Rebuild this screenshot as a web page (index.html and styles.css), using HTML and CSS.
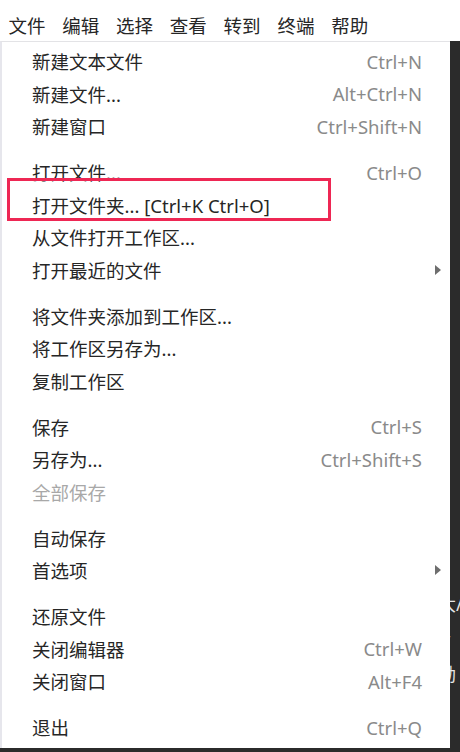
FILE: index.html
```html
<!DOCTYPE html>
<html lang="zh-CN">
<head>
<meta charset="utf-8">
<title>文件菜单</title>
<link rel="stylesheet" href="styles.css">
</head>
<body>
<div class="menubar">
  <span class="mb-item">文件</span>
  <span class="mb-item">编辑</span>
  <span class="mb-item">选择</span>
  <span class="mb-item">查看</span>
  <span class="mb-item">转到</span>
  <span class="mb-item">终端</span>
  <span class="mb-item">帮助</span>
</div>
<div class="workspace">
  <div class="menu">
    <div class="item"><span class="label">新建文本文件</span><span class="key">Ctrl+N</span></div>
    <div class="item"><span class="label">新建文件...</span><span class="key">Alt+Ctrl+N</span></div>
    <div class="item"><span class="label">新建窗口</span><span class="key">Ctrl+Shift+N</span></div>
    <div class="sep"></div>
    <div class="item"><span class="label">打开文件...</span><span class="key">Ctrl+O</span></div>
    <div class="item marked"><span class="label">打开文件夹... [Ctrl+K Ctrl+O]</span><span class="mark"></span></div>
    <div class="item"><span class="label">从文件打开工作区...</span></div>
    <div class="item"><span class="label">打开最近的文件</span><span class="arrow"></span></div>
    <div class="sep"></div>
    <div class="item"><span class="label">将文件夹添加到工作区...</span></div>
    <div class="item"><span class="label">将工作区另存为...</span></div>
    <div class="item"><span class="label">复制工作区</span></div>
    <div class="sep"></div>
    <div class="item"><span class="label">保存</span><span class="key">Ctrl+S</span></div>
    <div class="item"><span class="label">另存为...</span><span class="key">Ctrl+Shift+S</span></div>
    <div class="item disabled"><span class="label">全部保存</span></div>
    <div class="sep"></div>
    <div class="item"><span class="label">自动保存</span></div>
    <div class="item"><span class="label">首选项</span><span class="arrow"></span></div>
    <div class="sep"></div>
    <div class="item"><span class="label">还原文件</span></div>
    <div class="item"><span class="label">关闭编辑器</span><span class="key">Ctrl+W</span></div>
    <div class="item"><span class="label">关闭窗口</span><span class="key">Alt+F4</span></div>
    <div class="sep"></div>
    <div class="item"><span class="label">退出</span><span class="key">Ctrl+Q</span></div>
  </div>
  <div class="editor">
    <span class="frag f1">大/</span>
    <span class="frag f2">y</span>
    <span class="frag f3">励</span>
  </div>
</div>
</body>
</html>
```

FILE: styles.css
```css
html, body {
  margin: 0;
  padding: 0;
}
body {
  width: 460px;
  height: 752px;
  overflow: hidden;
  background: #ffffff;
  font-family: "Noto Sans", "Noto Sans CJK SC", sans-serif;
  color: #262626;
}
.menubar {
  height: 41px;
  box-sizing: border-box;
  padding-top: 10px;
  display: flex;
  font-size: 18.5px;
  line-height: 32px;
}
.mb-item {
  padding: 0 8.4px;
}
.workspace {
  display: flex;
  height: 711px;
  background: #2b2b2b;
}
.menu {
  width: 450px;
  flex: none;
  height: 707px;
  box-sizing: border-box;
  background: #ffffff;
  border-top: 1px solid #e3e3e6;
  border-left: 2px solid #e6e6ec;
  padding: 3px 28px 0 30px;
  font-size: 18.5px;
}
.item {
  position: relative;
  height: 32.5px;
  display: flex;
  align-items: center;
  justify-content: space-between;
  white-space: nowrap;
}
.label {
  color: #262626;
}
.key {
  color: #8a8a8a;
}
.disabled .label {
  color: #a8a8a8;
}
.sep {
  height: 13.5px;
}
.arrow {
  position: relative;
  left: 19px;
  width: 0;
  height: 0;
  border-top: 5px solid transparent;
  border-bottom: 5px solid transparent;
  border-left: 6px solid #6e6e6e;
}
.mark {
  position: absolute;
  left: -25px;
  top: -11px;
  width: 324px;
  height: 43px;
  box-sizing: border-box;
  border: 3px solid #ee2754;
}
.editor {
  flex: 1;
  overflow: hidden;
  display: flex;
  flex-direction: column;
  color: #e6e6e6;
  font-size: 18px;
  line-height: 20px;
  padding-top: 553px;
}
.frag {
  margin-left: -12px;
  white-space: nowrap;
}
.f2 {
  margin-top: 15px;
  margin-left: -9px;
}
.f3 {
  margin-top: 15px;
}
```
